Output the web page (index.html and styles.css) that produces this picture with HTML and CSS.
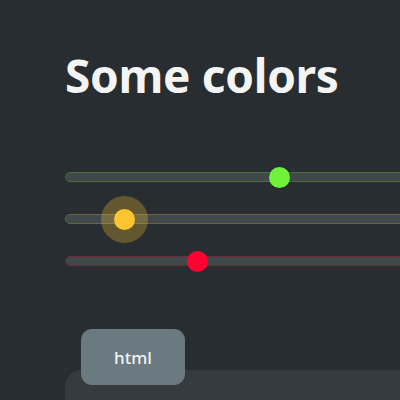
FILE: index.html
```html
<!DOCTYPE html>
<html>
<head>
<meta charset="utf-8">
<link rel="stylesheet" href="styles.css">
</head>
<body>
<div class="page">
  <h1 class="title">Some colors</h1>
  <div class="sliders">
    <div class="track green"><span class="thumb" style="left:213px"></span></div>
    <div class="track yellow"><span class="halo" style="left:58px"></span><span class="thumb" style="left:58px"></span></div>
    <div class="track red"><span class="thumb" style="left:131px"></span></div>
  </div>
  <div class="code">
    <div class="tab">html</div>
    <div class="card"></div>
  </div>
</div>
</body>
</html>
```
FILE: styles.css
```css
html, body {
  margin: 0;
  padding: 0;
  background: #272d30;
  width: 400px;
  height: 400px;
  overflow: hidden;
}
.page {
  width: 335px;
  height: 350px;
  overflow: hidden;
  padding: 50px 0 0 65px;
  box-sizing: content-box;
  font-family: "Noto Sans", "Open Sans", sans-serif;
}
.title {
  margin: 0;
  color: #f4f4f5;
  font-size: 46px;
  font-weight: 700;
  line-height: 50px;
  letter-spacing: -0.3px;
}
.sliders {
  margin-top: 72px;
  display: flex;
  flex-direction: column;
  gap: 32px;
}
.track {
  position: relative;
  height: 8px;
  width: 360px;
  border-radius: 5px;
  background: #3f484b;
  border: 1px solid;
}
.track.green { border-color: #4d6b3a; }
.track.yellow { border-color: #6a6538; }
.track.red { border-color: #6e2a3a; }
.thumb {
  position: absolute;
  top: 50%;
  width: 21px;
  height: 21px;
  margin: -10.5px 0 0 -10.5px;
  border-radius: 50%;
}
.green .thumb { background: #6ef23a; }
.yellow .thumb { background: #fec530; }
.red .thumb { background: #fe0232; }
.halo {
  position: absolute;
  top: 50%;
  width: 47px;
  height: 47px;
  margin: -23.5px 0 0 -23.5px;
  border-radius: 50%;
  background: rgba(254, 197, 48, 0.28);
}
.code {
  margin-top: 63px;
  position: relative;
}
.tab {
  position: relative;
  z-index: 1;
  margin-left: 16px;
  width: 104px;
  height: 56px;
  border-radius: 11px;
  background: #6b7a80;
  color: #f1f3f4;
  font-size: 17px;
  font-weight: 500;
  display: flex;
  align-items: center;
  justify-content: center;
}
.card {
  margin-top: -15px;
  height: 30px;
  width: 360px;
  background: #353b3e;
  border-radius: 16px 0 0 0;
}
```
